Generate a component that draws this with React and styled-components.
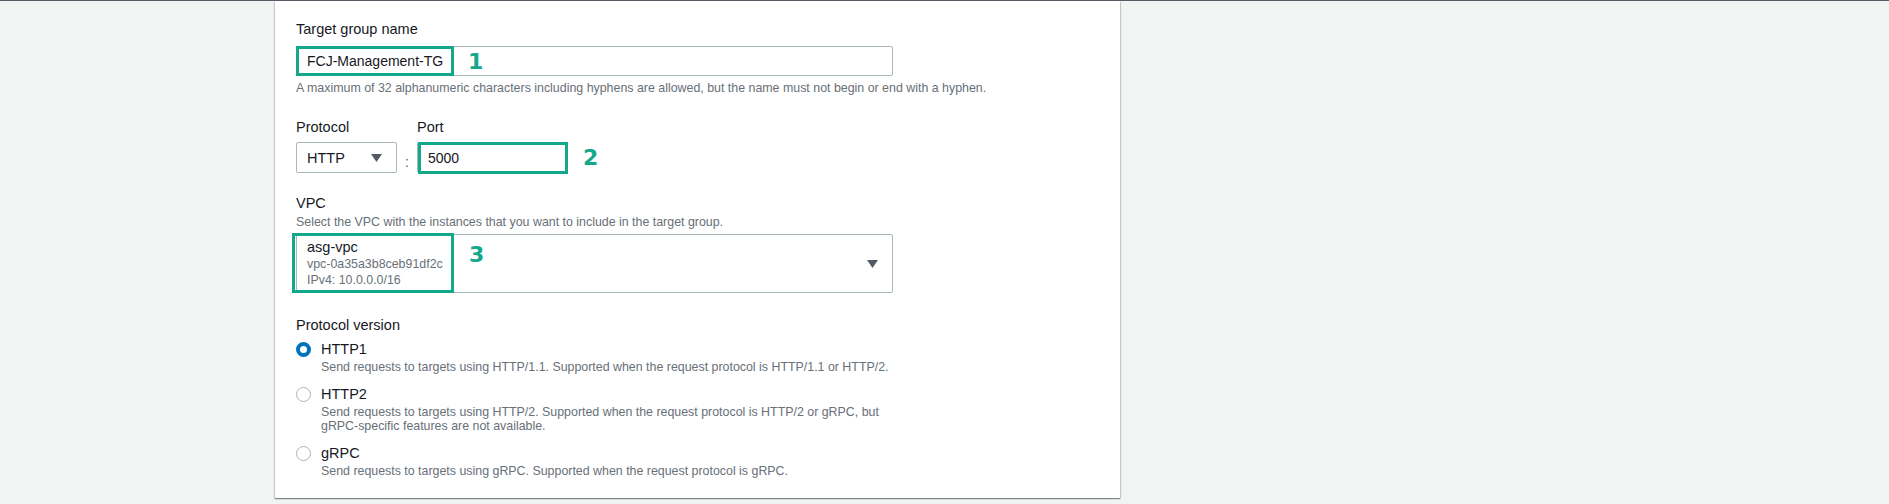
import React from "react";
import styled, { createGlobalStyle } from "styled-components";

const Global = createGlobalStyle`
  html, body { margin: 0; padding: 0; }
  body {
    background: #f2f3f3;
    font-family: "Liberation Sans", Arial, sans-serif;
    color: #16191f;
    border-top: 1px solid #545b64;
    height: 503px;
    overflow: hidden;
  }
`;

const Page = styled.div`
  display: flex;
  padding-left: 275px;
`;

const Card = styled.div`
  width: 845px;
  height: 497px;
  box-sizing: border-box;
  background: #fff;
  box-shadow: 0 1px 1px 0 rgba(0, 28, 36, 0.3), 1px 1px 1px 0 rgba(0, 28, 36, 0.15),
    -1px 1px 1px 0 rgba(0, 28, 36, 0.15);
  padding: 17px 20px 0 21px;
  display: flex;
  flex-direction: column;
`;

const Label = styled.div`
  font-size: 14.5px;
  line-height: 22px;
  color: #16191f;
  margin-top: ${(p) => p.$mt || 0}px;
`;

const Hint = styled.div`
  font-size: 12.4px;
  line-height: 16px;
  color: #687078;
  margin-top: ${(p) => p.$mt || 0}px;
`;

const Field = styled.div`
  position: relative;
  margin-top: ${(p) => p.$mt || 0}px;
  width: ${(p) => p.$w}px;
`;

const Input = styled.div`
  box-sizing: border-box;
  height: ${(p) => p.$h || 30}px;
  border: 1px solid #aab7b8;
  border-radius: 2px;
  padding: 0 10px;
  display: flex;
  align-items: center;
  font-size: 14px;
  color: #16191f;
`;

const Marker = styled.div`
  position: absolute;
  box-sizing: border-box;
  border: 3px solid #13a88a;
  left: ${(p) => p.$l}px;
  top: ${(p) => p.$t}px;
  width: ${(p) => p.$w}px;
  height: ${(p) => p.$h}px;
  pointer-events: none;
`;

const Num = styled.span`
  position: absolute;
  left: ${(p) => p.$l}px;
  top: ${(p) => p.$t}px;
  font-family: "DejaVu Sans", Verdana, sans-serif;
  font-weight: 700;
  font-size: 22px;
  line-height: 22px;
  color: #13a88a;
`;

const Row = styled.div`
  display: flex;
  align-items: flex-start;
  gap: ${(p) => p.$gap || 0}px;
  margin-top: ${(p) => p.$mt || 0}px;
`;

const Col = styled.div`
  display: flex;
  flex-direction: column;
`;

const Select = styled.div`
  box-sizing: border-box;
  width: ${(p) => p.$w}px;
  height: ${(p) => p.$h}px;
  border: 1px solid #aab7b8;
  border-radius: 2px;
  margin-top: ${(p) => (p.$flush ? 0 : 4)}px;
  padding: 0 14px 0 10px;
  display: flex;
  align-items: center;
  justify-content: space-between;
  font-size: 14.5px;
`;

const Caret = styled.svg`
  width: 11px;
  height: 8px;
  flex: none;
  fill: #545b64;
`;

const Colon = styled.span`
  font-size: 14px;
  color: #545b64;
  margin-top: 38px;
  width: 20px;
  text-align: center;
`;

const VpcText = styled.div`
  display: flex;
  flex-direction: column;
`;

const VpcName = styled.div`
  font-size: 14.5px;
  line-height: 17px;
  color: #16191f;
`;

const VpcMeta = styled.div`
  font-size: 12.4px;
  line-height: 16px;
  color: #687078;
`;

const RadioList = styled.div`
  display: flex;
  flex-direction: column;
  margin-top: 2px;
  gap: 8px;
`;

const RadioRow = styled.div`
  display: flex;
  align-items: flex-start;
  gap: 10px;
`;

const Radio = styled.span`
  box-sizing: border-box;
  width: 15px;
  height: 15px;
  border-radius: 50%;
  flex: none;
  margin-top: 4px;
  background: #fff;
  border: ${(p) => (p.$on ? "4.5px solid #0073bb" : "1px solid #aab7b8")};
`;

const RadioLabel = styled.div`
  font-size: 14.5px;
  line-height: 22px;
  color: #16191f;
`;

const RadioDesc = styled.div`
  font-size: 12.4px;
  line-height: 14.5px;
  color: #687078;
  max-width: 600px;
`;

const caret = (
  <Caret viewBox="0 0 11 8">
    <polygon points="0,0 11,0 5.5,8" />
  </Caret>
);

const options = [
  {
    name: "HTTP1",
    on: true,
    desc: "Send requests to targets using HTTP/1.1. Supported when the request protocol is HTTP/1.1 or HTTP/2.",
  },
  {
    name: "HTTP2",
    desc: (
      <>
        Send requests to targets using HTTP/2. Supported when the request protocol is HTTP/2 or gRPC, but
        <br />
        gRPC-specific features are not available.
      </>
    ),
  },
  {
    name: "gRPC",
    desc: "Send requests to targets using gRPC. Supported when the request protocol is gRPC.",
  },
];

export default function App() {
  return (
    <>
      <Global />
      <Page>
        <Card>
          <Label>Target group name</Label>
          <Field $mt={6} $w={597}>
            <Input>FCJ-Management-TG</Input>
            <Marker $l={0} $t={0} $w={158} $h={30} />
            <Num $l={172} $t={5}>1</Num>
          </Field>
          <Hint $mt={4}>
            A maximum of 32 alphanumeric characters including hyphens are allowed, but the name must not begin or
            end with a hyphen.
          </Hint>

          <Row $mt={20}>
            <Col>
              <Label>Protocol</Label>
              <Select $w={101} $h={31}>
                HTTP
                {caret}
              </Select>
            </Col>
            <Colon>:</Colon>
            <Col>
              <Label>Port</Label>
              <Field $mt={4} $w={150}>
                <Input $h={31}>5000</Input>
                <Marker $l={1} $t={0} $w={150} $h={32} />
                <Num $l={166} $t={5}>2</Num>
              </Field>
            </Col>
          </Row>

          <Label $mt={19}>VPC</Label>
          <Hint>Select the VPC with the instances that you want to include in the target group.</Hint>
          <Field $mt={4} $w={597}>
            <Select $w={597} $h={59} $flush>
              <VpcText>
                <VpcName>asg-vpc</VpcName>
                <VpcMeta>vpc-0a35a3b8ceb91df2c</VpcMeta>
                <VpcMeta>IPv4: 10.0.0.0/16</VpcMeta>
              </VpcText>
              {caret}
            </Select>
            <Marker $l={-4} $t={-1} $w={162} $h={60} />
            <Num $l={173} $t={10}>3</Num>
          </Field>

          <Label $mt={21}>Protocol version</Label>
          <RadioList>
            {options.map((o) => (
              <RadioRow key={o.name}>
                <Radio $on={o.on} />
                <Col>
                  <RadioLabel>{o.name}</RadioLabel>
                  <RadioDesc>{o.desc}</RadioDesc>
                </Col>
              </RadioRow>
            ))}
          </RadioList>
        </Card>
      </Page>
    </>
  );
}
